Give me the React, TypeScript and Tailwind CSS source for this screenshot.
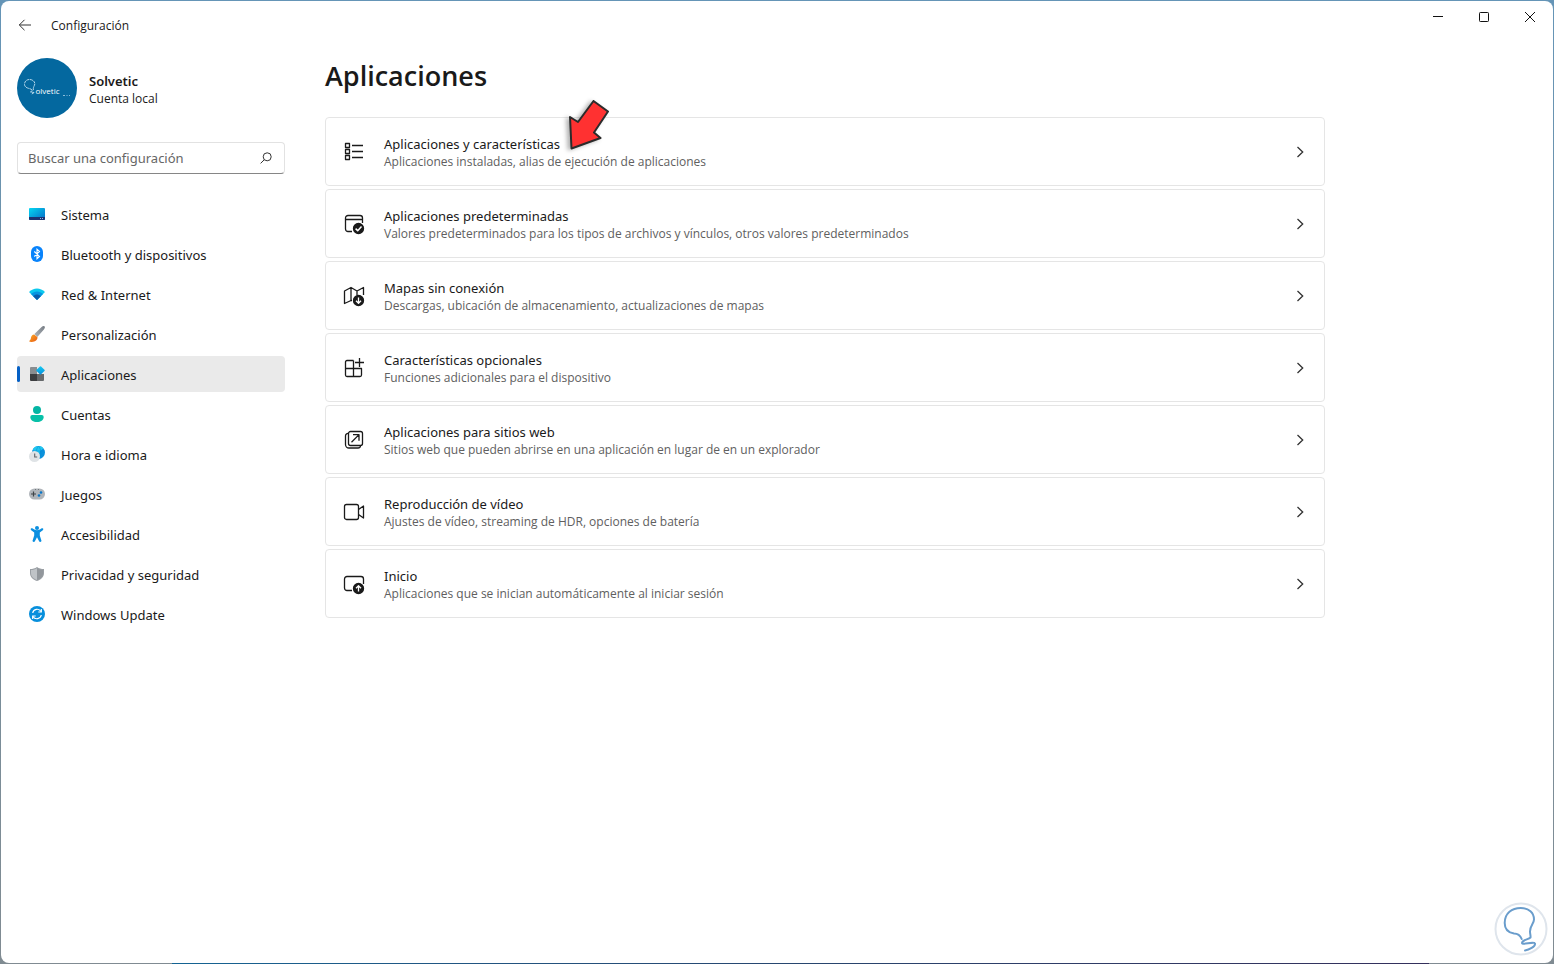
import React from "react";

type Item = { label: string; icon: React.ReactNode; active?: boolean };
type Card = { title: string; text: string; icon: React.ReactNode };

function Glyph({ children }: { children: React.ReactNode }) {
  return (
    <svg width="16" height="16" viewBox="0 0 16 16" aria-hidden="true" className="shrink-0">
      {children}
    </svg>
  );
}

function Outline({ children }: { children: React.ReactNode }) {
  return (
    <svg
      width="22"
      height="22"
      viewBox="0 0 22 22"
      fill="none"
      stroke="#1a1a1a"
      strokeWidth="1.3"
      strokeLinejoin="round"
      aria-hidden="true"
      className="shrink-0"
    >
      {children}
    </svg>
  );
}

const items: Item[] = [
  {
    label: "Sistema",
    icon: (
      <Glyph>
        <defs>
          <linearGradient id="sys" x1="0" y1="0" x2="1" y2="1">
            <stop offset="0" stopColor="#05d8f2" />
            <stop offset="1" stopColor="#0669c6" />
          </linearGradient>
        </defs>
        <rect y="2" width="16" height="12" rx="1" fill="url(#sys)" />
        <path d="M0 11h16v2a1 1 0 0 1-1 1H1a1 1 0 0 1-1-1z" fill="#1c3373" />
        <path d="M11 12h1v1h-1zM13 12h1v1h-1z" fill="#8fb8e6" />
      </Glyph>
    ),
  },
  {
    label: "Bluetooth y dispositivos",
    icon: (
      <Glyph>
        <rect x="2" width="12" height="16" rx="6" fill="#0883fb" />
        <path d="M5.3 5.5l5.200 5L8 12.700V3.300l2.500 2.200-5.200 5" fill="none" stroke="#fff" strokeWidth="1.1" />
      </Glyph>
    ),
  },
  {
    label: "Red & Internet",
    icon: (
      <Glyph>
        <path d="M0 6C4.500 1.300 11.500 1.300 16 6L8 14z" fill="#0cc9ee" />
        <path d="M2 8c3.500-3.500 8.500-3.500 12 0l-6 6z" fill="#0795e0" />
        <path d="M4.200 10.200c2.200-2.200 5.400-2.200 7.600 0L8 14z" fill="#0b5cab" />
      </Glyph>
    ),
  },
  {
    label: "Personalización",
    icon: (
      <Glyph>
        <defs>
          <linearGradient id="handle" x1="1" y1="0" x2="0" y2="1">
            <stop offset="0" stopColor="#777d84" />
            <stop offset="1" stopColor="#aeb5bc" />
          </linearGradient>
          <linearGradient id="brush" x1="0" y1="0" x2="1" y2="1">
            <stop offset="0" stopColor="#fbae27" />
            <stop offset="1" stopColor="#e95a14" />
          </linearGradient>
        </defs>
        <path d="M15.600.4c-.8-.7-2-.3-3 .6L5.400 8.100l2.900 2.900 6.600-7.600c.9-1 1.400-2.300.7-3z" fill="url(#handle)" />
        <path d="M5.200 8.400c-1.900 0-2.900 1.500-3.200 3.200C1.900 13.500 1 14.700 0 15.200c1.300 1 5.200 1.200 7.300-.9 1.100-1.100 1.500-2.500 1-3.300z" fill="url(#brush)" />
      </Glyph>
    ),
  },
  {
    label: "Aplicaciones",
    active: true,
    icon: (
      <Glyph>
        <defs>
          <linearGradient id="diamond" x1="0" y1="0" x2="1" y2="1">
            <stop offset="0" stopColor="#13cdf2" />
            <stop offset="1" stopColor="#078bdb" />
          </linearGradient>
        </defs>
        <path d="M2 1h6v7H1V2a1 1 0 0 1 1-1z" fill="#898d90" />
        <path d="M1 8h7v7H2a1 1 0 0 1-1-1z" fill="#3c3e40" />
        <path d="M8 8h7v6a1 1 0 0 1-1 1H8z" fill="#66696b" />
        <rect x="8.300" y="1.200" width="6.400" height="6.400" rx="0.800" transform="rotate(45 11.500 4.400)" fill="url(#diamond)" />
      </Glyph>
    ),
  },
  {
    label: "Cuentas",
    icon: (
      <Glyph>
        <circle cx="8" cy="4" r="4" fill="#04b5a4" />
        <path d="M3.300 9h9.400A2 2 0 0 1 14.700 11c0 3-3 5-6.700 5s-6.700-2-6.700-5a2 2 0 0 1 2-2z" fill="#08c0a8" />
      </Glyph>
    ),
  },
  {
    label: "Hora e idioma",
    icon: (
      <Glyph>
        <circle cx="9.500" cy="6.500" r="6.500" fill="#0b91db" />
        <path d="M4 3C6-.5 12-1 14.500 2.500L11 5l-1 4-5-2z" fill="#20c6ef" />
        <path d="M9.500 0c-3 4-3 8 0 13M9.500 0c3 4 3 8 0 13M3 5h13" stroke="#078bd4" strokeWidth=".5" fill="none" />
        <circle cx="5.500" cy="10.500" r="5.500" fill="#dfe3e6" />
        <path d="M5.700 7.500V11h2.500" stroke="#5d6368" strokeWidth="1.100" fill="none" />
      </Glyph>
    ),
  },
  {
    label: "Juegos",
    icon: (
      <Glyph>
        <rect y="2.500" width="16" height="11" rx="5.500" fill="#b0b5ba" />
        <path d="M6 3h1v1H6zM9 3h1v1H9z" fill="#72777b" />
        <path d="M2 8h5M4.500 5.500v5" stroke="#3e4347" strokeWidth="1.200" />
        <circle cx="12" cy="6.500" r="1.300" fill="#0877c9" />
        <circle cx="10" cy="9.500" r="1.300" fill="#0877c9" />
      </Glyph>
    ),
  },
  {
    label: "Accesibilidad",
    icon: (
      <Glyph>
        <circle cx="8" cy="2" r="2" fill="#0b8fe0" />
        <path
          d="M2 2.600c.5-.6 1.100-.4 1.700 0C6.500 4.700 9.500 4.700 12.300 2.600c.6-.4 1.200-.6 1.700 0s.3 1.200-.2 1.600L10.800 6.500v3l1.600 4.900c.4 1.600-1.800 2.300-2.400.7L8 11.300l-2 3.800c-.6 1.600-2.800.9-2.400-.7l1.600-4.900v-3L2.200 4.200c-.5-.4-.7-1-.2-1.600z"
          fill="#0b8fe0"
        />
      </Glyph>
    ),
  },
  {
    label: "Privacidad y seguridad",
    icon: (
      <Glyph>
        <path d="M8 1c2 1.400 4.300 2 7 2v4c0 4-3 6.700-7 8-4-1.300-7-4-7-8V3c2.700 0 5-.6 7-2z" fill="#9a9fa4" />
        <path d="M8 2.200C6.300 3.300 4.300 3.900 2 4v3c0 3.500 2.500 5.700 6 7z" fill="#bfc3c7" />
        <path d="M8 2.200c1.700 1.100 3.700 1.700 6 1.800v3c0 3.500-2.500 5.700-6 7z" fill="#92979c" />
      </Glyph>
    ),
  },
  {
    label: "Windows Update",
    icon: (
      <Glyph>
        <circle cx="8" cy="8" r="8" fill="#078fdc" />
        <path d="M3.700 7A4.500 4.500 0 0 1 12 5.500M12.300 9A4.500 4.500 0 0 1 4 10.500" fill="none" stroke="#fff" strokeWidth="1.200" />
        <path d="M12.300 3v3H9.300M3.700 13v-3h3" fill="none" stroke="#fff" strokeWidth="1.200" />
      </Glyph>
    ),
  },
];

const cards: Card[] = [
  {
    title: "Aplicaciones y características",
    text: "Aplicaciones instaladas, alias de ejecución de aplicaciones",
    icon: (
      <Outline>
        <path d="M2.500 2.500h4v4h-4zM2.500 8.500h4v4h-4zM2.500 14.500h4v4h-4z" />
        <path d="M9 4.500h11M9 10.500h11M9 16.500h11" />
      </Outline>
    ),
  },
  {
    title: "Aplicaciones predeterminadas",
    text: "Valores predeterminados para los tipos de archivos y vínculos, otros valores predeterminados",
    icon: (
      <Outline>
        <path d="M9 18.500H5A2.500 2.500 0 0 1 2.500 16V5A2.500 2.500 0 0 1 5 2.500h12A2.500 2.500 0 0 1 19.500 5v5M2.500 6.500h17" />
        <circle cx="15.500" cy="15.500" r="5" fill="#1a1a1a" />
        <path d="M12.600 15.600l2.100 2.100 3.800-4.100" stroke="#fff" strokeWidth="1.500" />
      </Outline>
    ),
  },
  {
    title: "Mapas sin conexión",
    text: "Descargas, ubicación de almacenamiento, actualizaciones de mapas",
    icon: (
      <Outline>
        <path d="M9 15.500L8 15.500l-6.500 3V6L8 2.500l6 3.500 6.500-3.500V10M8 2.500v13M14 6v4" />
        <circle cx="15.500" cy="15.500" r="5" fill="#1a1a1a" />
        <path d="M15.500 12.500v5.500M13 15.800l2.500 2.500 2.500-2.500" stroke="#fff" />
      </Outline>
    ),
  },
  {
    title: "Características opcionales",
    text: "Funciones adicionales para el dispositivo",
    icon: (
      <Outline>
        <path d="M10.500 3.500H4A1.500 1.500 0 0 0 2.500 5v13A1.500 1.500 0 0 0 4 19.500h13a1.500 1.500 0 0 0 1.500-1.500V11.500H2.500M10.500 3.500v16M16.500 1v9M12 5.500h9" />
      </Outline>
    ),
  },
  {
    title: "Aplicaciones para sitios web",
    text: "Sitios web que pueden abrirse en una aplicación en lugar de en un explorador",
    icon: (
      <Outline>
        <rect x="5.500" y="2.500" width="14" height="14" rx="2" />
        <path d="M5.500 4.500A2.500 2.500 0 0 0 2.500 7v8.500a3.500 3.500 0 0 0 3.500 3.500h9a2.500 2.500 0 0 0 2.500-2.500M8.500 13.200l7.300-7.300M10 5.700h6v6" />
      </Outline>
    ),
  },
  {
    title: "Reproducción de vídeo",
    text: "Ajustes de vídeo, streaming de HDR, opciones de batería",
    icon: (
      <Outline>
        <rect x="1.500" y="3.500" width="14" height="15" rx="2" />
        <path d="M15.500 8.500l5-3.500v12l-5-3.500" />
      </Outline>
    ),
  },
  {
    title: "Inicio",
    text: "Aplicaciones que se inician automáticamente al iniciar sesión",
    icon: (
      <Outline>
        <path d="M9 17.500H4A2.500 2.500 0 0 1 1.500 15V6A2.500 2.500 0 0 1 4 3.500h14A2.500 2.500 0 0 1 20.500 6v5" />
        <circle cx="15.500" cy="15.500" r="5" fill="#1a1a1a" />
        <path d="M15.500 18.500V13M13 15.200l2.500-2.500 2.500 2.500" stroke="#fff" />
      </Outline>
    ),
  },
];

function Avatar() {
  return (
    <svg width="60" height="60" viewBox="0 0 60 60" aria-hidden="true" className="shrink-0">
      <circle cx="30" cy="30" r="30" fill="#04689f" />
      <path
        d="M15 32c-1-2-7-1-7.500-5.500 0-3 2-5 5-5s5.500 2 5.300 4.500c-.3 2-1.800 3-1.500 6l-3 2 4 .5-2.500 1.500"
        fill="none"
        stroke="#c6e2f2"
        strokeWidth=".9"
        strokeDasharray="3 .6"
      />
      <text x="18.500" y="36" fontSize="8" fill="#fff" fontFamily="Open Sans, sans-serif">
        olvetic
      </text>
      <path d="M46 37.500h2M49.500 37.500h1M52 37.500h1" stroke="#8bbddb" />
    </svg>
  );
}

export default function App() {
  return (
    <div className="flex min-h-screen flex-col bg-linear-to-b from-[#6595b7] via-[#748f9f] to-[#808b92] px-px pt-px font-['Noto_Sans','Open_Sans',sans-serif] text-[#1a1a1a]">
      <div className="relative flex flex-1 flex-col overflow-hidden rounded-lg bg-white">
        <header className="flex h-12 shrink-0 items-center justify-between">
          <div className="flex items-center">
            <button type="button" aria-label="Atrás" className="flex h-9 w-12 items-center justify-center">
              <svg width="14" height="12" viewBox="0 0 14 12" fill="none" stroke="#333" aria-hidden="true">
                <path d="M6.500.8L1.300 6l5.200 5.200M1.300 6H13" />
              </svg>
            </button>
            <span className="ml-0.5 pt-0.5 font-['Open_Sans',sans-serif] text-[12px] leading-4">Configuración</span>
          </div>
          <div className="flex self-start">
            <button type="button" aria-label="Minimizar" className="flex h-8 w-[46px] items-center justify-center">
              <svg width="10" height="10" viewBox="0 0 10 10" stroke="#111" aria-hidden="true">
                <path d="M0 4.500h10" />
              </svg>
            </button>
            <button type="button" aria-label="Maximizar" className="flex h-8 w-[46px] items-center justify-center">
              <svg width="10" height="10" viewBox="0 0 10 10" fill="none" stroke="#111" aria-hidden="true">
                <rect x=".5" y=".5" width="9" height="9" rx=".8" />
              </svg>
            </button>
            <button type="button" aria-label="Cerrar" className="flex h-8 w-[46px] items-center justify-center">
              <svg width="10" height="10" viewBox="0 0 10 10" stroke="#111" aria-hidden="true">
                <path d="M0 0l10 10M10 0L0 10" />
              </svg>
            </button>
          </div>
        </header>

        <div className="flex flex-1 gap-10 px-4 pt-[9px]">
          <aside className="w-[268px] shrink-0">
            <div className="flex items-center gap-3">
              <Avatar />
              <div className="pt-1">
                <p className="text-[13px] leading-[18px] font-semibold">Solvetic</p>
                <p className="font-['Open_Sans',sans-serif] text-[12px] leading-[18px]">Cuenta local</p>
              </div>
            </div>

            <label className="mt-6 flex h-8 items-center rounded border border-[#e2e2e2] border-b-[#868686] pr-3 pl-2.5">
              <input
                type="text"
                aria-label="Buscar una configuración"
                placeholder="Buscar una configuración"
                className="min-w-0 flex-1 bg-transparent text-[13px] leading-5 outline-none placeholder:text-[#666]"
              />
              <svg width="12" height="12" viewBox="0 0 12 12" fill="none" stroke="#333" aria-hidden="true">
                <circle cx="7.200" cy="4.800" r="4" />
                <path d="M4.300 7.700L.6 11.400" />
              </svg>
            </label>

            <nav className="mt-[22px] flex flex-col gap-1">
              {items.map((item) => (
                <a
                  key={item.label}
                  href="#"
                  aria-current={item.active ? "page" : undefined}
                  className={
                    item.active
                      ? "relative flex h-9 items-center gap-4 rounded bg-[#eaeaea] px-3"
                      : "relative flex h-9 items-center gap-4 rounded px-3"
                  }
                >
                  {item.active && <span className="absolute top-2.5 left-0 h-4 w-[3px] rounded-full bg-[#0560c5]" />}
                  {item.icon}
                  <span className="pt-0.5 text-[13px] leading-5">{item.label}</span>
                </a>
              ))}
            </nav>
          </aside>

          <main className="min-w-0 max-w-[1000px] flex-1">
            <h1 className="font-['Open_Sans',sans-serif] text-[27px] leading-9 font-semibold">Aplicaciones</h1>
            <div className="relative mt-[23px] flex flex-col gap-[3px]">
              {cards.map((card) => (
                <a
                  key={card.title}
                  href="#"
                  className="flex h-[69px] items-center rounded border border-[#e5e5e5] pr-5 pl-[17px]"
                >
                  {card.icon}
                  <span className="ml-[19px] flex flex-1 flex-col pt-0.5">
                    <span className="text-[13px] leading-[18px]">{card.title}</span>
                    <span className="font-['Open_Sans',sans-serif] text-[12px] leading-[18px] text-[#606060]">
                      {card.text}
                    </span>
                  </span>
                  <svg width="8" height="12" viewBox="0 0 8 12" fill="none" stroke="#333" strokeWidth="1.300" aria-hidden="true">
                    <path d="M1.500 1L6.700 6l-5.200 5" />
                  </svg>
                </a>
              ))}
              <svg
                width="50"
                height="60"
                viewBox="0 0 50 60"
                aria-hidden="true"
                className="absolute -top-[22px] left-[238px] drop-shadow-[-3px_1px_2px_rgba(0,0,0,0.3)]"
              >
                <path
                  d="M30.500 6L45 16.500 31 37.500l6.500 5.500L8.500 53.500 7 22l8 5z"
                  fill="#ff3131"
                  stroke="#2b2b2b"
                  strokeWidth="2"
                  strokeLinejoin="round"
                />
              </svg>
            </div>
          </main>
        </div>

        <svg width="56" height="56" viewBox="0 0 56 56" fill="none" aria-hidden="true" className="absolute right-1 bottom-1.5">
          <circle cx="28" cy="28" r="25.500" stroke="#dfe5ec" strokeWidth="2" />
          <path
            d="M28.700 38C27.500 35 26 32.500 21 32.500 14.500 31.500 11.700 27 11.700 22 11.700 12 19 7 27.700 7 36 7 41 12 41 18.500c0 4-4 6-4 12 0 3 .8 3.500.5 6-2 2-8.500 2.500-8.500 5.500 0 2.500 12-2 13 .5.500 3-6 6.500-10 7"
            stroke="#6a9dcc"
            strokeWidth="2"
            strokeLinecap="round"
          />
        </svg>
      </div>
      <div className="flex h-px">
        <div className="w-[11%]" />
        <div className="flex-1 bg-linear-to-r from-[#146493] via-[#28466f] to-[#34305c]" />
        <div className="w-[8%]" />
      </div>
    </div>
  );
}
